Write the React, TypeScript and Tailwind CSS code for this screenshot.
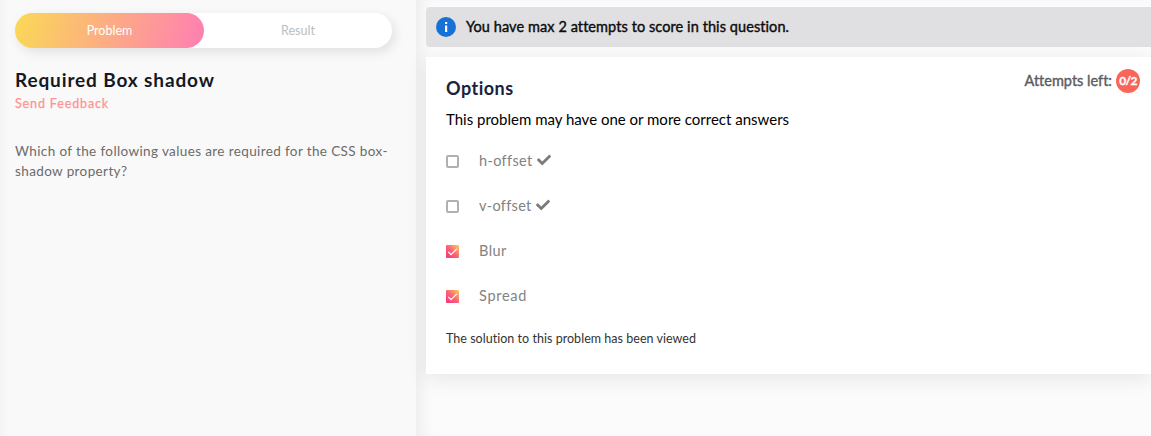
import React, { useState } from "react";

function HeavyCheck() {
  return (
    <svg viewBox="0 0 512 512" className="h-[14px] w-[14px] fill-[#7b7b7b]" aria-hidden="true">
      <path d="M173.898 439.404l-166.4-166.4c-9.997-9.997-9.997-26.206 0-36.204l36.203-36.204c9.997-9.998 26.207-9.998 36.204 0L192 312.69 432.095 72.596c9.997-9.997 26.207-9.997 36.204 0l36.203 36.204c9.997 9.997 9.997 26.206 0 36.204l-294.4 294.401c-9.998 9.997-26.207 9.997-36.204-.001z" />
    </svg>
  );
}

function Box({ checked }: { checked: boolean }) {
  if (!checked) {
    return <span className="mt-[2px] size-[13px] shrink-0 rounded-[2px] border-2 border-[#b0b0b0] bg-white" />;
  }
  return (
    <span className="mt-[2px] flex size-[13px] shrink-0 items-center justify-center rounded-[1px] bg-linear-[45deg,#f5317f,#fb6376_50%,#fbd15b]">
      <svg viewBox="0 0 13 13" className="size-[13px]" fill="none" stroke="#fff" strokeWidth="1.2">
        <path d="M2.3 6.9 5 9.6 10.8 3.8" />
      </svg>
    </span>
  );
}

const initialOptions = [
  { label: "h-offset", correct: true, checked: false, tracking: "tracking-[0.35px]" },
  { label: "v-offset", correct: true, checked: false, tracking: "tracking-[0.3px]" },
  { label: "Blur", correct: false, checked: true, tracking: "tracking-[0.4px]" },
  { label: "Spread", correct: false, checked: true, tracking: "tracking-[0.7px]" },
];

export default function App() {
  const [options, setOptions] = useState(initialOptions);
  const toggle = (i: number) =>
    setOptions(options.map((o, n) => (n === i ? { ...o, checked: !o.checked } : o)));

  return (
    <div className="flex h-[436px] w-full overflow-hidden bg-[#fbfbfb] font-['Lato','Noto_Sans',sans-serif] [font-variant-ligatures:none]">
      <aside className="h-full w-[416px] shrink-0 bg-[#f9f9f9] px-[15px] pt-[13px] shadow-[inset_9px_0_8px_-6px_rgba(0,0,0,0.03)]">
        <div className="flex h-[35px] w-[377px] rounded-full bg-white text-[12.5px] leading-[35px] shadow-[3px_4px_12px_rgba(0,0,0,0.1)]">
          <button className="h-full w-[189px] rounded-full bg-linear-[105deg,#fad956,#ff7eb3] text-white">
            Problem
          </button>
          <button className="h-full flex-1 text-[#bdbdbd]">Result</button>
        </div>
        <h1 className="mt-[20px] whitespace-nowrap text-[19px] leading-6 font-bold tracking-[0.87px] text-[#141824]">
          Required Box shadow
        </h1>
        <a className="mt-[3px] block whitespace-nowrap text-[12.5px] leading-[18px] tracking-[0.87px] text-[#ff9391] [-webkit-text-stroke:0.25px]">
          Send Feedback
        </a>
        <p className="mt-[28px] whitespace-nowrap text-[13.5px] leading-5 tracking-[0.38px] text-[#6b6b6b]">
          Which of the following values are required for the CSS box-
          <br />
          shadow property?
        </p>
      </aside>

      <main className="h-full min-w-0 flex-1 pt-[7px] pl-[10px] shadow-[inset_12px_0_14px_-6px_rgba(0,0,0,0.06)]">
        <div className="flex h-10 items-center rounded-l-[4px] bg-[#e0e0e2] pl-[10px]">
          <svg viewBox="0 0 20 20" className="size-5" aria-hidden="true">
            <circle cx="10" cy="10" r="10" fill="#1670d6" />
            <rect x="9" y="5" width="2.2" height="2" fill="#fff" />
            <rect x="9" y="8.5" width="2.2" height="6.5" fill="#fff" />
          </svg>
          <span className="ml-[10px] whitespace-nowrap text-[14.5px] tracking-[0.08px] text-[#0c0c0e] [-webkit-text-stroke:0.4px]">
            You have max 2 attempts to score in this question.
          </span>
        </div>

        <section className="mt-[10px] h-[317px] bg-white pl-5 shadow-[0_4px_20px_rgba(0,0,0,0.09)]">
          <div className="flex h-[51px] justify-between">
            <h2 className="mt-[19px] text-[18px] leading-6 font-bold tracking-[0.5px] text-[#1b2140]">Options</h2>
            <div className="mt-3 mr-[11px] flex h-6 items-center">
              <span className="whitespace-nowrap text-[14.5px] text-[#5c5c60] [-webkit-text-stroke:0.4px]">
                Attempts left:
              </span>
              <span className="ml-1 flex size-6 items-center justify-center rounded-full bg-[#fa6559] text-[12px] font-bold tracking-[-0.7px] text-white [-webkit-text-stroke:0.3px]">
                0/2
              </span>
            </div>
          </div>
          <p className="whitespace-nowrap text-[15px] leading-[22px] text-black">
            This problem may have one or more correct answers
          </p>
          <div className="mt-[20px] flex flex-col gap-[25px]">
            {options.map((o, i) => (
              <label key={o.label} className="flex h-5 items-center" onClick={() => toggle(i)}>
                <Box checked={o.checked} />
                <span className={"mt-[2px] ml-[20px] text-[14.5px] leading-5 text-[#828282] " + o.tracking}>{o.label}</span>
                {o.correct && (
                  <span className="ml-1">
                    <HeavyCheck />
                  </span>
                )}
              </label>
            ))}
          </div>
          <p className="mt-[24px] whitespace-nowrap text-[12.5px] leading-[19px] tracking-[0.03px] text-[#333]">
            The solution to this problem has been viewed
          </p>
        </section>
      </main>
    </div>
  );
}
